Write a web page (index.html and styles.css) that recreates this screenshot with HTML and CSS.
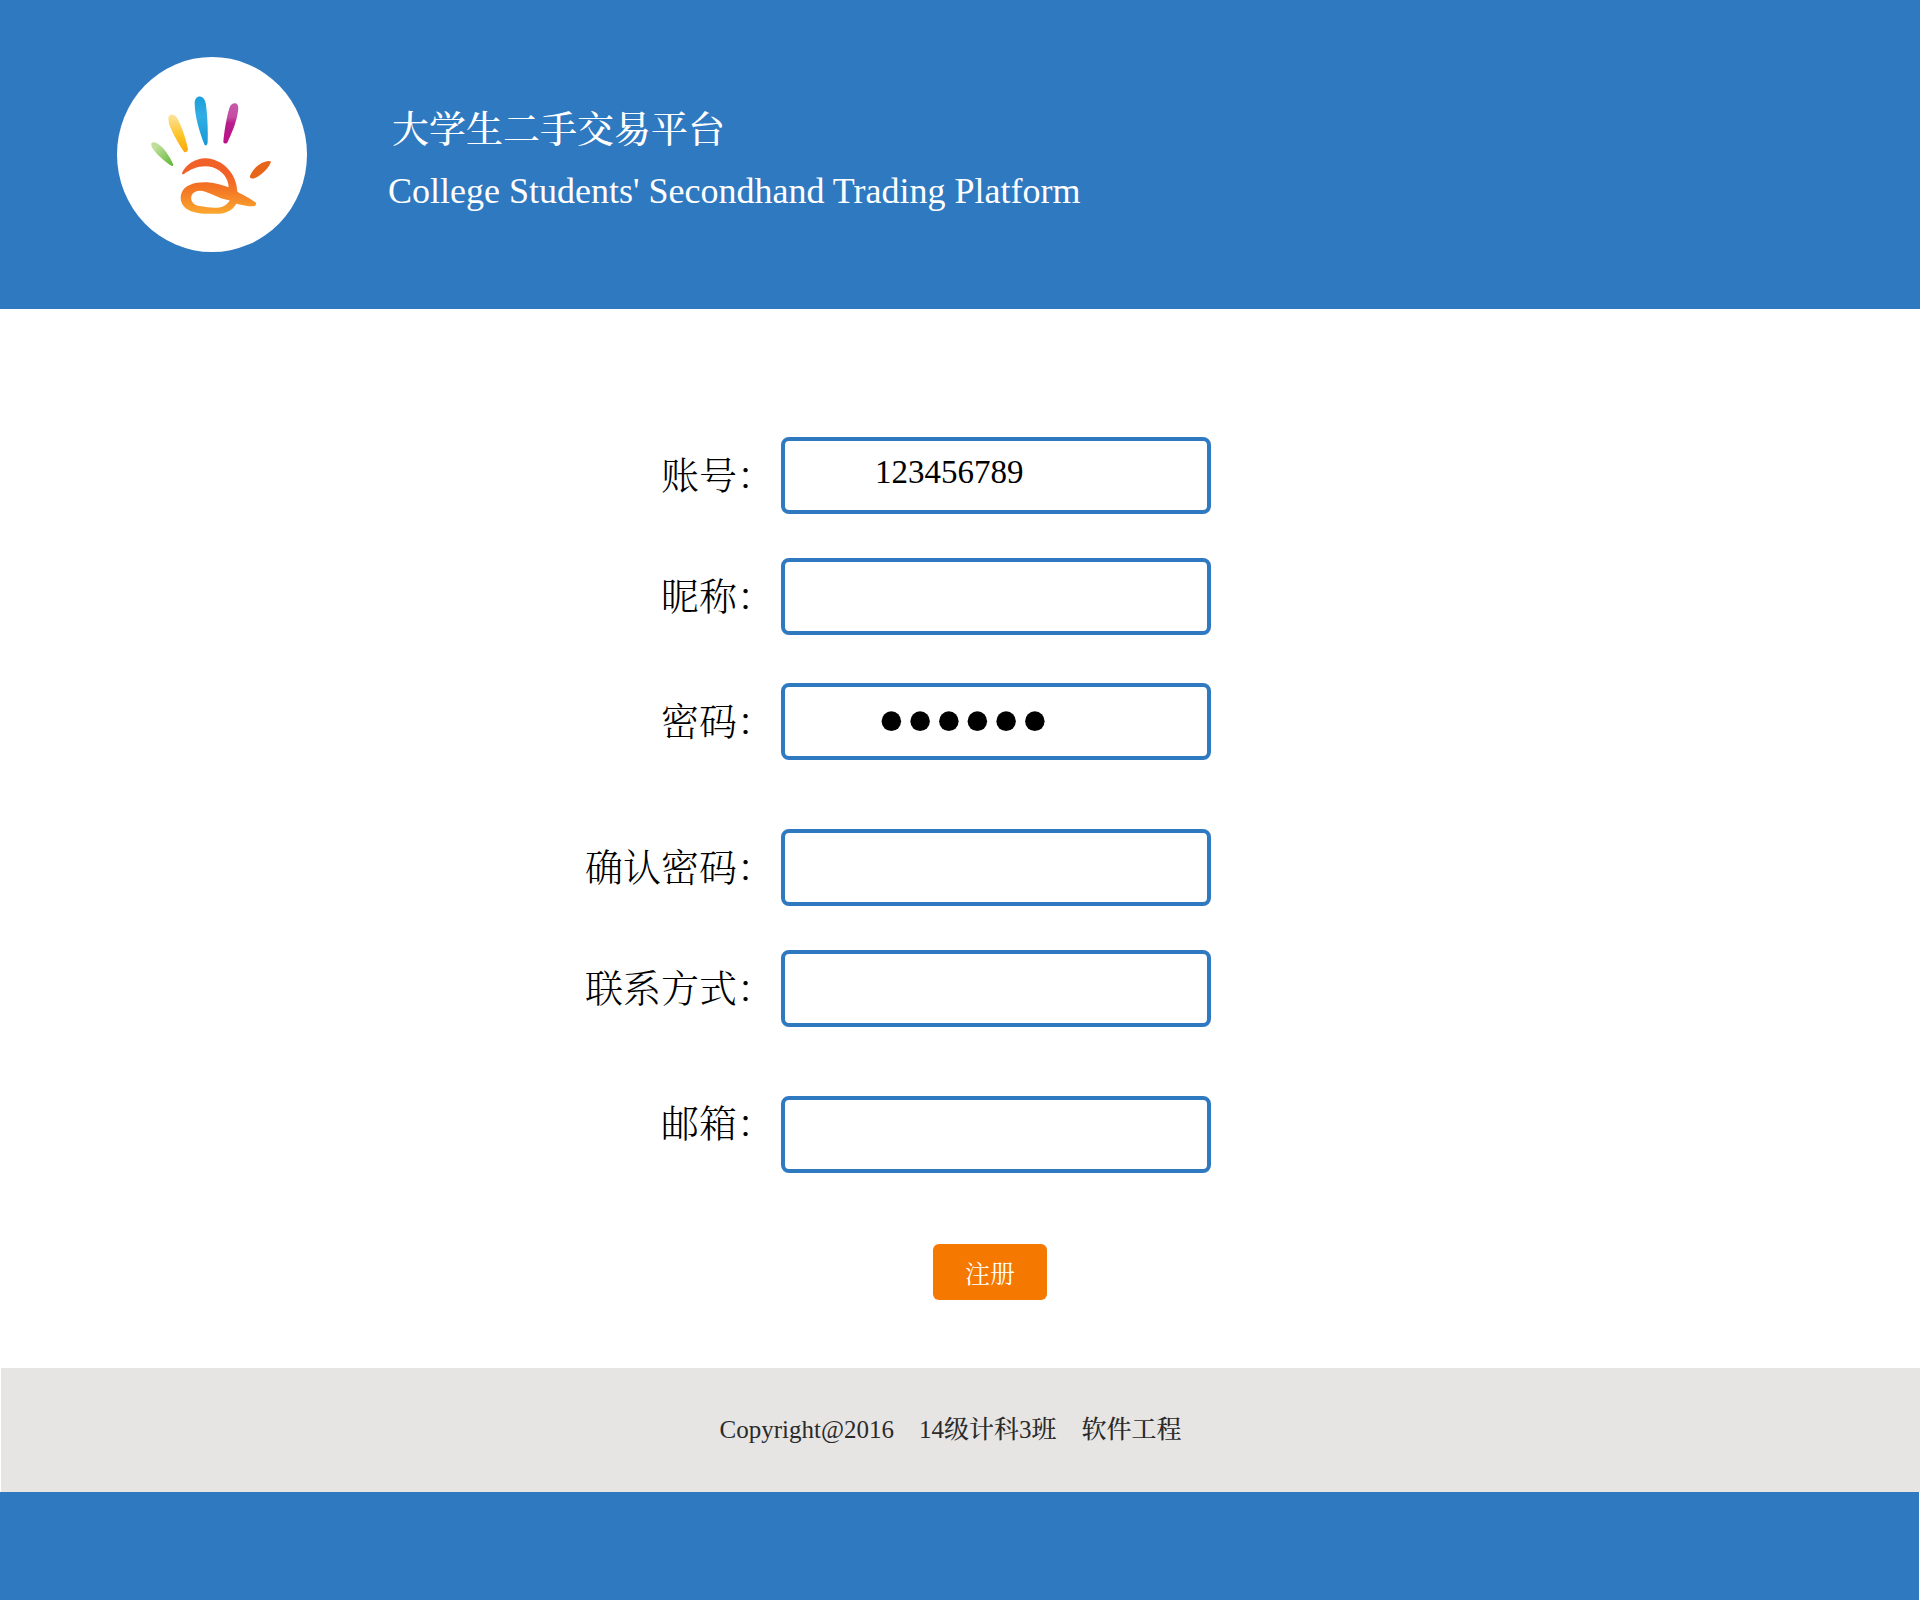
FILE: index.html
```html
<!DOCTYPE html>
<html lang="zh-CN">
<head>
<meta charset="utf-8">
<meta name="viewport" content="width=device-width, initial-scale=1">
<title>大学生二手交易平台</title>
<link rel="stylesheet" href="styles.css">
</head>
<body>
<header class="banner">
  <svg class="logo" viewBox="21 20 570 585" preserveAspectRatio="none" aria-hidden="true">
    <defs>
      <linearGradient id="green" x1="0" y1="0" x2="1" y2="1"><stop offset="0.2" stop-color="#c0e09a"/><stop offset="1" stop-color="#5cb531"/></linearGradient>
      <linearGradient id="yellow" x1="0" y1="0" x2="0" y2="1"><stop offset="0" stop-color="#fbe3a0"/><stop offset="0.55" stop-color="#fdc526"/><stop offset="1" stop-color="#f9a70c"/></linearGradient>
      <linearGradient id="blue" x1="0" y1="0" x2="0" y2="1"><stop offset="0" stop-color="#1c9fdb"/><stop offset="0.4" stop-color="#31aee4"/><stop offset="1" stop-color="#1797d6"/></linearGradient>
      <linearGradient id="purple" x1="0" y1="0" x2="0" y2="1"><stop offset="0" stop-color="#c75aa9"/><stop offset="0.35" stop-color="#c44ba3"/><stop offset="0.5" stop-color="#b81b8c"/><stop offset="1" stop-color="#bd1187"/></linearGradient>
      <linearGradient id="palm" gradientUnits="userSpaceOnUse" x1="0" y1="322" x2="0" y2="492"><stop offset="0" stop-color="#f0622a"/><stop offset="0.3" stop-color="#f25f24"/><stop offset="0.6" stop-color="#f47b25"/><stop offset="1" stop-color="#fba92f"/></linearGradient>
    </defs>
    <ellipse cx="306" cy="312.500" rx="285" ry="292.500" fill="#fff"/>
    <path fill="url(#green)" d="M124 279C130 271 143 278 155 289C168 302 183 325 190 343Q189 349 184 346C168 338 131 305 124 287Z"/>
    <path fill="url(#yellow)" d="M175 204C176 190 191 189 200 201C213 223 226 260 234 296Q233 306 224 306C215 296 187 249 177 220Z"/>
    <path fill="url(#blue)" d="M254 158C254 143 264 136 273 139C283 142 288 154 289 173C293 207 294 243 293 277Q290 289 284 284C270 250 254 198 254 158Z"/>
    <path fill="url(#purple)" d="M358 174C361 160 373 156 380 160C387 165 385 178 382 195C376 224 363 254 352 277Q344 283 340 276C342 249 349 203 358 174Z"/>
    <path fill="#e76518" d="M419 380C424 360 446 340 463 335Q478 330 483 334C477 354 451 376 437 382Q424 388 419 380Z"/>
    <path fill="url(#palm)" fill-rule="evenodd" d="M216 368C227 343 257 323 288 324C340 327 380 371 382 424C396 433 422 443 438 458Q440 467 429 468C413 468 397 464 379 460C367 482 342 492 315 490C283 492 249 489 229 475C213 464 208 444 215 427C225 402 259 394 292 396C317 398 338 405 356 411C355 384 337 361 308 351C276 342 245 354 222 371Q216 374 216 368ZM245 435C239 453 251 466 274 468C297 472 330 477 348 463Q358 457 359 450C335 447 314 435 288 425C269 418 251 422 245 435Z"/>
  </svg>
  <div class="brand">
    <h1 class="brand-name">大学生二手交易平台</h1>
    <p class="brand-sub" lang="en">College Students' Secondhand Trading Platform</p>
  </div>
</header>

<main class="content">
  <form class="form">
    <div class="field">
      <label class="label" for="account">账号：</label>
      <input class="input" id="account" type="text" value="123456789">
    </div>
    <div class="field">
      <label class="label" for="nickname">昵称：</label>
      <input class="input" id="nickname" type="text">
    </div>
    <div class="field gap-medium">
      <label class="label" for="password">密码：</label>
      <input class="input input-password" id="password" type="password" value="123456">
    </div>
    <div class="field gap-wide">
      <label class="label" for="confirm">确认密码：</label>
      <input class="input input-password" id="confirm" type="password">
    </div>
    <div class="field">
      <label class="label" for="contact">联系方式：</label>
      <input class="input" id="contact" type="text">
    </div>
    <div class="field gap-wide align-top">
      <label class="label" for="email">邮箱：</label>
      <input class="input" id="email" type="text">
    </div>
    <div class="actions">
      <button class="submit" type="submit">注册</button>
    </div>
  </form>
</main>

<footer class="footer">
  <p class="copyright">Copyright@2016　14级计科3班　软件工程</p>
  <div class="footer-bar"></div>
</footer>
</body>
</html>
```

FILE: styles.css
```css
:root {
  --blue: #2f79c1;
  --orange: #f57900;
  --serif: "Liberation Serif", "Noto Serif CJK SC", "Noto Sans CJK SC", serif;
}

* {
  box-sizing: border-box;
}

body {
  display: flex;
  flex-direction: column;
  min-height: 100vh;
  margin: 0;
  background: #fff;
  color: #000;
  font-family: var(--serif);
}

.banner {
  display: flex;
  align-items: center;
  gap: 81px;
  padding: 57px 117px;
  background: var(--blue);
  color: #fff;
}

.logo {
  flex: none;
  width: 190px;
  height: 195px;
}

.brand {
  padding-top: 12px;
}

.brand-name {
  margin: 0;
  padding-left: 4px;
  font-size: 37px;
  font-weight: 500;
  line-height: 60px;
}

.brand-sub {
  margin: 0;
  font-size: 36px;
  line-height: 60px;
}

.content {
  display: flex;
  justify-content: center;
  padding: 128px 124px 68px 0;
}

.form {
  width: 626px;
}

.field {
  display: flex;
  align-items: center;
  justify-content: flex-end;
  gap: 6px;
}

.field + .field {
  margin-top: 44px;
}

.form .gap-medium {
  margin-top: 48px;
}

.form .gap-wide {
  margin-top: 69px;
}

.align-top {
  align-items: flex-start;
}

.label {
  font-size: 38px;
  font-weight: 300;
  line-height: 56px;
  white-space: nowrap;
}

.input {
  width: 430px;
  height: 77px;
  padding: 0 16px 6px 90px;
  border: 4px solid var(--blue);
  border-radius: 8px;
  background: #fff;
  color: #000;
  font-family: var(--serif);
  font-size: 33px;
}

.input-password {
  padding: 0 16px 0 92px;
  font-size: 82px;
}

.actions {
  display: flex;
  justify-content: center;
  margin-top: 71px;
  padding-left: 184px;
}

.submit {
  width: 114px;
  height: 56px;
  padding: 0;
  border: 0;
  border-radius: 6px;
  background: var(--orange);
  color: #fff;
  font-family: var(--serif);
  font-size: 25px;
}

.footer {
  display: flex;
  flex: 1;
  flex-direction: column;
}

.copyright {
  margin: 0 0 0 1px;
  padding: 32px 20px 32px 0;
  background: #e6e5e3;
  color: #2b2b2b;
  font-size: 25px;
  font-weight: 500;
  line-height: 60px;
  text-align: center;
}

.footer-bar {
  flex: 1;
  min-height: 108px;
  margin-right: 1px;
  background: var(--blue);
}
```
